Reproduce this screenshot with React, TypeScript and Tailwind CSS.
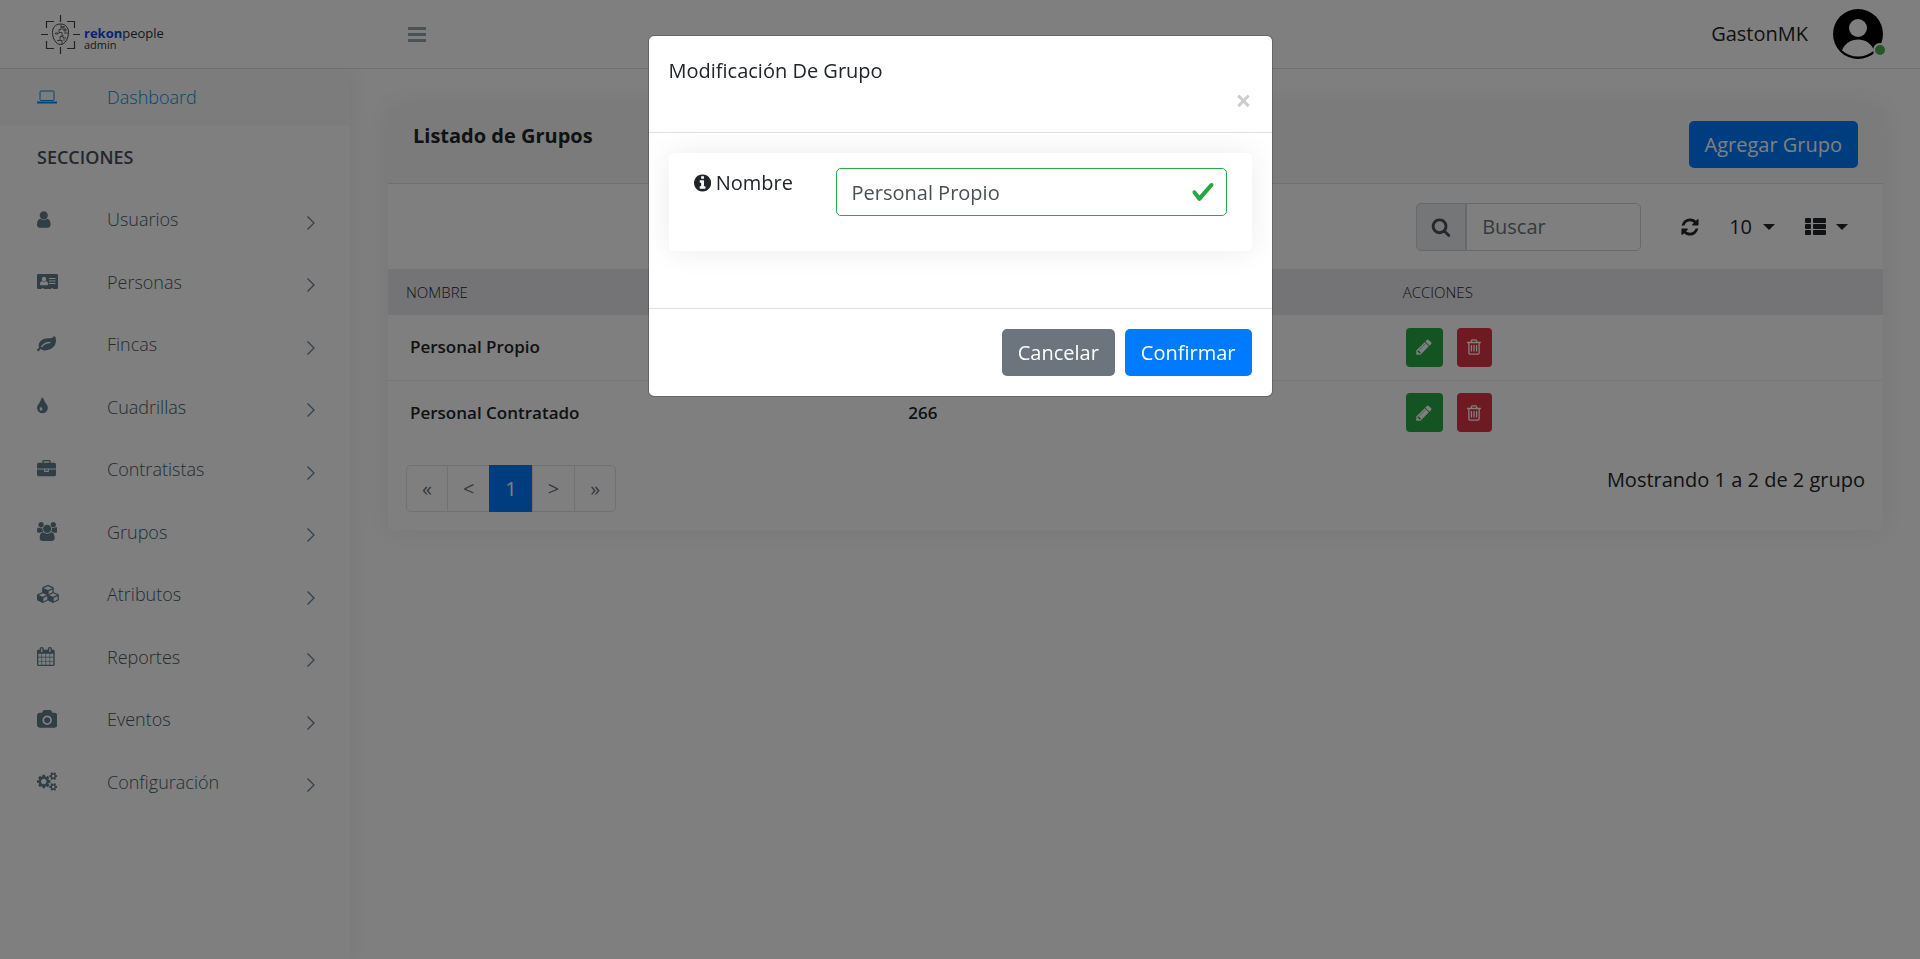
import { useState } from "react";
import type { ReactNode } from "react";

type IconProps = { className?: string };

type GlyphProps = IconProps & { d: string; w?: number };

function Glyph({ d, w = 1792, className }: GlyphProps) {
  return (
    <svg viewBox={`0 0 ${w} 1792`} fill="currentColor" aria-hidden="true" className={className}>
      <path d={d} />
    </svg>
  );
}

const glyphs = {
  user: "M1280 1399q0 109-62.5 187t-150.5 78h-854q-88 0-150.5-78t-62.5-187q0-85 8.5-160.5t31.5-152 58.5-131 94-89 134.5-34.5q131 128 313 128t313-128q76 0 134.5 34.5t94 89 58.5 131 31.5 152 8.5 160.5zm-256-887q0 159-112.5 271.5t-271.5 112.5-271.5-112.5-112.5-271.5 112.5-271.5 271.5-112.5 271.5 112.5 112.5 271.5z",
  leaf: "M1280 704q0-26-19-45t-45-19q-172 0-318 49.5t-259.5 134-235.5 219.5q-19 21-19 45 0 26 19 45t45 19q24 0 45-19 27-24 74-71t67-66q137-124 268.5-176t313.5-52q26 0 45-19t19-45zm512-198q0 95-20 193-46 224-184.5 383t-357.5 268q-214 108-438 108-148 0-286-47-15-5-88-42t-96-37q-16 0-39.5 32t-45 70-52.5 70-60 32q-43 0-63.5-17.5t-45.5-59.5q-2-4-6-11t-5.5-10-3-9.5-1.5-13.5q0-35 31-73.5t68-65.5 68-56 31-48q0-4-14-38t-16-44q-9-51-9-104 0-115 43.5-220t119-184.5 170.5-139 204-95.5q55-18 145-25.5t179.5-9 178.5-6 163.5-24 113.5-56.5l29.5-29.5 29.5-28 27-20 36.5-16 43.5-4.5q39 0 70.5 46t47.5 112 24 124 8 96z",
  tint: "M512 1152q0-36-20-69-1-1-15.5-22.5t-25.5-38-25-44-21-50.5q-4-16-21-16t-21 16q-7 23-21 50.5t-25 44-25.5 38-15.5 22.5q-20 33-20 69 0 53 37.5 90.5t90.5 37.5 90.5-37.5 37.5-90.5zm512-128q0 212-150 362t-362 150-362-150-150-362q0-145 81-275 6-9 62.5-90.5t101-151 99.5-178 83-201.5q9-30 34-47t51-17 51.5 17 33.5 47q28 93 83 201.5t99.5 178 101 151 62.5 90.5q81 127 81 275z",
  briefcase: "M640 256h512v-128h-512v128zm1152 640v480q0 66-47 113t-113 47h-1472q-66 0-113-47t-47-113v-480h672v160q0 26 19 45t45 19h320q26 0 45-19t19-45v-160h672zm-768 0v128h-256v-128h256zm768-480v384h-1792v-384q0-66 47-113t113-47h352v-160q0-40 28-68t68-28h576q40 0 68 28t28 68v160h352q66 0 113 47t47 113z",
  users: "M593 896q-162 5-265 128h-134q-82 0-138-40.5t-56-118.5q0-353 124-353 6 0 43.5 21t97.5 42.5 119 21.5q67 0 133-23-5 37-5 66 0 159 90 287zm1071 637q0 120-73 189.5t-194 69.5h-874q-121 0-194-69.5t-73-189.5q0-53 3.5-103.5t14-109 26.5-108.5 43-97.5 62-81 85.5-53.5 111.5-20q10 0 43 21.5t73 48 107 48 135 21.5 135-21.5 107-48 73-48 43-21.5q61 0 111.5 20t85.5 53.5 62 81 43 97.5 26.5 108.5 14 109 3.5 103.5zm-1024-1277q0 106-75 181t-181 75-181-75-75-181 75-181 181-75 181 75 75 181zm704 384q0 159-112.5 271.5t-271.5 112.5-271.5-112.5-112.5-271.5 112.5-271.5 271.5-112.5 271.5 112.5 112.5 271.5zm576 225q0 78-56 118.5t-138 40.5h-134q-103-123-265-128 90-128 90-287 0-29-5-66 66 23 133 23 59 0 119-21.5t97.5-42.5 43.5-21q124 0 124 353zm-128-609q0 106-75 181t-181 75-181-75-75-181 75-181 181-75 181 75 75 181z",
  cubes: "M640 1632l384-192v-314l-384 164v342zm-64-454l404-173-404-173-404 173zm1088 454l384-192v-314l-384 164v342zm-64-454l404-173-404-173-404 173zm-448-293l384-165v-266l-384 164v267zm-64-379l441-189-441-189-441 189zm1088 518v416q0 36-19 67t-52 47l-448 224q-25 14-57 14t-57-14l-448-224q-4-2-7-4-2 2-7 4l-448 224q-25 14-57 14t-57-14l-448-224q-33-16-52-47t-19-67v-416q0-38 21.5-70t56.5-48l434-186v-400q0-38 21.5-70t56.5-48l448-192q23-10 50-10t50 10l448 192q35 16 56.5 48t21.5 70v400l434 186q36 16 57 48t21 70z",
  calendar: "M128 1664h288v-288h-288v288zm352 0h320v-288h-320v288zm-352-352h288v-320h-288v320zm352 0h320v-320h-320v320zm-352-384h288v-288h-288v288zm736 736h320v-288h-320v288zm-384-736h320v-288h-320v288zm768 736h288v-288h-288v288zm-384-352h320v-320h-320v320zm-352-864v-288q0-13-9.5-22.5t-22.5-9.5h-64q-13 0-22.5 9.5t-9.5 22.5v288q0 13 9.5 22.5t22.5 9.5h64q13 0 22.5-9.5t9.5-22.5zm736 864h288v-320h-288v320zm-384-384h320v-288h-320v288zm384 0h288v-288h-288v288zm32-480v-288q0-13-9.5-22.5t-22.5-9.5h-64q-13 0-22.5 9.5t-9.5 22.5v288q0 13 9.5 22.5t22.5 9.5h64q13 0 22.5-9.5t9.5-22.5zm384-64v1280q0 52-38 90t-90 38h-1408q-52 0-90-38t-38-90v-1280q0-52 38-90t90-38h128v-96q0-66 47-113t113-47h64q66 0 113 47t47 113v96h384v-96q0-66 47-113t113-47h64q66 0 113 47t47 113v96h128q52 0 90 38t38 90z",
  camera: "M960 672q119 0 203.5 84.5t84.5 203.5-84.5 203.5-203.5 84.5-203.5-84.5-84.5-203.5 84.5-203.5 203.5-84.5zm704-416q106 0 181 75t75 181v896q0 106-75 181t-181 75h-1408q-106 0-181-75t-75-181v-896q0-106 75-181t181-75h224l51-136q19-49 69.5-84.5t103.5-35.5h512q53 0 103.5 35.5t69.5 84.5l51 136h224zm-704 1152q185 0 316.5-131.5t131.5-316.5-131.5-316.5-316.5-131.5-316.5 131.5-131.5 316.5 131.5 316.5 316.5 131.5z",
  cogs: "M896 896q0-106-75-181t-181-75-181 75-75 181 75 181 181 75 181-75 75-181zm768 512q0-52-38-90t-90-38-90 38-38 90q0 53 37.5 90.5t90.5 37.5 90.5-37.5 37.5-90.5zm0-1024q0-52-38-90t-90-38-90 38-38 90q0 53 37.5 90.5t90.5 37.5 90.5-37.5 37.5-90.5zm-384 421v185q0 10-7 19.5t-16 10.5l-155 24q-11 35-32 76 34 48 90 115 7 11 7 20 0 12-7 19-23 30-82.5 89.5t-78.5 59.5q-11 0-21-7l-115-90q-37 19-77 31-11 108-23 155-7 24-30 24h-186q-11 0-20-7.5t-10-17.5l-23-153q-34-10-75-31l-118 89q-7 7-20 7-11 0-21-8-144-133-144-160 0-9 7-19 10-14 41-53t47-61q-23-44-35-82l-152-24q-10-1-17-9.5t-7-19.5v-185q0-10 7-19.5t16-10.5l155-24q11-35 32-76-34-48-90-115-7-11-7-20 0-12 7-20 22-30 82-89t79-59q11 0 21 7l115 90q34-18 77-32 11-108 23-154 7-24 30-24h186q11 0 20 7.5t10 17.5l23 153q34 10 75 31l118-89q8-7 20-7 11 0 21 8 144 133 144 160 0 8-7 19-12 16-42 54t-45 60q23 48 34 82l152 23q10 2 17 10.5t7 19.5zm640 533v140q0 16-149 31-12 27-30 52 51 113 51 138 0 4-4 7-122 71-124 71-8 0-46-47t-52-68q-20 2-30 2t-30-2q-14 21-52 68t-46 47q-2 0-124-71-4-3-4-7 0-25 51-138-18-25-30-52-149-15-149-31v-140q0-16 149-31 13-29 30-52-51-113-51-138 0-4 4-7 4-2 35-20t59-34 30-16q8 0 46 46.5t52 67.5q20-2 30-2t30 2q51-71 92-112l6-2q4 0 124 70 4 3 4 7 0 25-51 138 17 23 30 52 149 15 149 31zm0-1024v140q0 16-149 31-12 27-30 52 51 113 51 138 0 4-4 7-122 71-124 71-8 0-46-47t-52-68q-20 2-30 2t-30-2q-14 21-52 68t-46 47q-2 0-124-71-4-3-4-7 0-25 51-138-18-25-30-52-149-15-149-31v-140q0-16 149-31 13-29 30-52-51-113-51-138 0-4 4-7 4-2 35-20t59-34 30-16q8 0 46 46.5t52 67.5q20-2 30-2t30 2q51-71 92-112l6-2q4 0 124 70 4 3 4 7 0 25-51 138 17 23 30 52 149 15 149 31z",
  search: "M1216 832q0-185-131.5-316.5t-316.5-131.5-316.5 131.5-131.5 316.5 131.5 316.5 316.5 131.5 316.5-131.5 131.5-316.5zm512 832q0 52-38 90t-90 38q-54 0-90-38l-343-342q-179 124-399 124-143 0-273.5-55.5t-225-150-150-225-55.5-273.5 55.5-273.5 150-225 225-150 273.5-55.5 273.5 55.5 225 150 150 225 55.5 273.5q0 220-124 399l343 343q37 37 37 90z",
  refresh: "M1639 1056q0 5-1 7-64 268-268 434.5t-478 166.5q-146 0-282.5-55t-243.5-157l-129 129q-19 19-45 19t-45-19-19-45v-448q0-26 19-45t45-19h448q26 0 45 19t19 45-19 45l-137 137q71 66 161 102t187 36q134 0 250-65t186-179q11-17 53-117 8-23 30-23h192q13 0 22.5 9.5t9.5 22.5zm25-800v448q0 26-19 45t-45 19h-448q-26 0-45-19t-19-45 19-45l138-138q-148-137-349-137-134 0-250 65t-186 179q-11 17-53 117-8 23-30 23h-199q-13 0-22.5-9.5t-9.5-22.5v-7q65-268 270-434.5t480-166.5q146 0 284 55.5t245 156.5l130-129q19-19 45-19t45 19 19 45z",
  pencil: "M491 1536l91-91-235-235-91 91v107h128v128h107zm523-928q0-22-22-22-10 0-17 7l-542 542q-7 7-7 17 0 22 22 22 10 0 17-7l542-542q7-7 7-17zm-54-192l416 416-832 832h-416v-416zm683 96q0 53-37 90l-166 166-416-416 166-165q36-38 90-38 53 0 91 38l235 234q37 39 37 91z",
  trash: "M704 736v576q0 14-9 23t-23 9h-64q-14 0-23-9t-9-23v-576q0-14 9-23t23-9h64q14 0 23 9t9 23zm256 0v576q0 14-9 23t-23 9h-64q-14 0-23-9t-9-23v-576q0-14 9-23t23-9h64q14 0 23 9t9 23zm256 0v576q0 14-9 23t-23 9h-64q-14 0-23-9t-9-23v-576q0-14 9-23t23-9h64q14 0 23 9t9 23zm128 724v-948h-896v948q0 22 7 40.5t14.5 27 10.5 8.5h832q3 0 10.5-8.5t14.5-27 7-40.5zm-672-1076h448l-48-117q-7-9-17-11h-317q-10 2-17 11zm928 32v64q0 14-9 23t-23 9h-96v948q0 83-47 143.5t-113 60.5h-832q-66 0-113-58.5t-47-141.5v-952h-96q-14 0-23-9t-9-23v-64q0-14 9-23t23-9h309l70-167q15-37 54-63t79-26h320q40 0 79 26t54 63l70 167h309q14 0 23 9t9 23z",
  info: "M1024 1376v-160q0-14-9-23t-23-9h-96v-512q0-14-9-23t-23-9h-320q-14 0-23 9t-9 23v160q0 14 9 23t23 9h96v320h-96q-14 0-23 9t-9 23v160q0 14 9 23t23 9h448q14 0 23-9t9-23zm-128-896v-160q0-14-9-23t-23-9h-192q-14 0-23 9t-9 23v160q0 14 9 23t23 9h192q14 0 23-9t9-23zm640 416q0 209-103 385.5t-279.5 279.5-385.5 103-385.5-103-279.5-279.5-103-385.5 103-385.5 279.5-279.5 385.5-103 385.5 103 279.5 279.5 103 385.5z",
};

function LaptopIcon({ className }: IconProps) {
  return (
    <svg viewBox="0 0 20 14" fill="none" stroke="currentColor" className={className} aria-hidden="true">
      <rect x="3" y="1" width="14" height="9.5" rx="1" />
      <path d="M0 12.5h20" strokeWidth="2" />
    </svg>
  );
}

function IdCardIcon({ className }: IconProps) {
  return (
    <svg viewBox="0 0 21 16" className={className} aria-hidden="true">
      <path fill="currentColor" fillRule="evenodd" d="M1.3 0h18.4Q21 0 21 1.3v12.4Q21 15 19.700 15H16v-1h-1.500v1h-8v-1H5v1H1.300Q0 15 0 13.700V1.300Q0 0 1.300 0zM7 2.800a2.200 2.400 0 1 0 0 4.800 2.200 2.400 0 0 0 0-4.800zM3 10.400q0 .9 1 .9h6q1 0 1-.9 0-3.200-2-3.200-2 1.400-4 0-2 0-2 3.200zM12 4v1.100h6.500V4zM12 6.500v1.100h6.500V6.500zM12 9v1.100h6.500V9z" />
    </svg>
  );
}

function ThListIcon({ className }: IconProps) {
  return (
    <svg viewBox="0 0 21 17" fill="currentColor" className={className} aria-hidden="true">
      {[0, 6, 12].map((y) => (
        <g key={y}>
          <rect x="0" y={y} width="6" height="5" rx="1" />
          <rect x="8" y={y} width="13" height="5" rx="1" />
        </g>
      ))}
    </svg>
  );
}

function ChevronIcon() {
  return (
    <svg viewBox="0 0 8 14" fill="none" stroke="currentColor" strokeWidth="1.2" className="mt-[7px] h-3.5 w-2" aria-hidden="true">
      <path d="M.5.5 7 7 .5 13.500" />
    </svg>
  );
}

function Caret() {
  return (
    <svg viewBox="0 0 12 6" fill="currentColor" className="h-1.5 w-3" aria-hidden="true">
      <path d="M0 0h12L6 6z" />
    </svg>
  );
}

function Logo() {
  return (
    <a href="#inicio" className="flex items-center gap-1 pt-px" aria-label="rekonpeople admin">
      <svg viewBox="0 0 39 39" fill="none" stroke="#444" className="size-[39px]" aria-hidden="true">
        <path d="M5.500 13V6.500H13M26 6.500h7.500V13M33.500 26v7.500H26M13 33.500H5.500V26" strokeWidth="1.200" />
        <path d="M19.500 0v7M19.500 32v7M0 19.500h7M32 19.500h7" strokeWidth="1.200" />
        <path d="M19.500 9c-5 0-8 3.500-8 8.500 0 6 3.500 12 8 12s8-6 8-12c0-5-3-8.500-8-8.500z" />
        <path d="M20 9.500v5h-2v3h3v4h-2v4h2v3.500M22 11v4h4M23 18h4M22 20v3h3M22 25h2M14 18.500q2-1.500 3.500 0-1.500 1.500-3.500 0M16 25.500h3M20 12h4M24 13v4" strokeWidth=".8" />
      </svg>
      <span className="flex flex-col pt-2 text-[#333]">
        <span className="text-[13px] leading-3"><b className="text-[#1048e0]">rekon</b>people</span>
        <span className="text-[11px] leading-3">admin</span>
      </span>
    </a>
  );
}

function Avatar() {
  return (
    <span className="relative block size-[50px]">
      <svg viewBox="0 0 50 50" className="size-[50px]" aria-hidden="true">
        <circle cx="25" cy="25" r="25" fill="#000" />
        <circle cx="25" cy="19" r="9" fill="#fff" />
        <path d="M9 41.500C12 34 18 30.500 25 30.500S38 34 41 41.500Q34 47.500 25 47.500T9 41.500z" fill="#fff" />
      </svg>
      <span className="absolute -right-1 bottom-0.5 size-3.5 rounded-full border-2 border-white bg-[#4caf50]" />
    </span>
  );
}

const sections: { label: string; icon: ReactNode }[] = [
  { label: "Usuarios", icon: <Glyph d={glyphs.user} w={1280} className="h-[19px]" /> },
  { label: "Personas", icon: <IdCardIcon className="h-4" /> },
  { label: "Fincas", icon: <Glyph d={glyphs.leaf} className="h-[19px]" /> },
  { label: "Cuadrillas", icon: <Glyph d={glyphs.tint} w={1024} className="h-[19px]" /> },
  { label: "Contratistas", icon: <Glyph d={glyphs.briefcase} className="h-[19px]" /> },
  { label: "Grupos", icon: <Glyph d={glyphs.users} w={1920} className="h-[19px]" /> },
  { label: "Atributos", icon: <Glyph d={glyphs.cubes} w={2304} className="h-[18px]" /> },
  { label: "Reportes", icon: <Glyph d={glyphs.calendar} w={1664} className="h-[19px]" /> },
  { label: "Eventos", icon: <Glyph d={glyphs.camera} w={1920} className="h-[19px]" /> },
  { label: "Configuración", icon: <Glyph d={glyphs.cogs} w={1920} className="h-[19px]" /> },
];

const groups = [
  { name: "Personal Propio", people: 184 },
  { name: "Personal Contratado", people: 266 },
];

const pages = ["«", "<", "1", ">", "»"];

function Topbar() {
  return (
    <header className="relative z-10 flex h-[69px] shrink-0 items-center border-b border-[#e0e0e0] bg-white pr-[37px] pl-[41px]">
      <div className="w-[367px]">
        <Logo />
      </div>
      <button type="button" aria-label="Menú" className="flex w-[18px] flex-col gap-[3px]">
        <span className="h-[3px] bg-[#90a4ae]" />
        <span className="h-[3px] bg-[#90a4ae]" />
        <span className="h-[3px] bg-[#90a4ae]" />
      </button>
      <div className="ml-auto flex items-center gap-[25px]">
        <span>GastonMK</span>
        <Avatar />
      </div>
    </header>
  );
}

function Sidebar() {
  return (
    <nav className="w-[350px] shrink-0 text-lg font-light text-[#607d8b] shadow-[1px_0_20px_rgba(0,0,0,0.08)]">
      <a href="#dashboard" className="flex h-[57px] items-center bg-[#f9f9f9] pb-0.5 pl-[37px] text-[#0290e0]">
        <span className="w-[70px]">
          <LaptopIcon className="h-3.5" />
        </span>
        Dashboard
      </a>
      <h2 className="flex h-[62px] items-center pl-[37px] font-semibold text-[#4a4f5c]">SECCIONES</h2>
      <ul className="grid h-[625px] auto-rows-fr">
        {sections.map((section) => (
          <li key={section.label} className="flex">
            <a href={`#${section.label.toLowerCase()}`} className="flex flex-1 items-center pr-[35px] pl-[37px]">
              <span className="w-[70px]">{section.icon}</span>
              <span className="flex-1 text-[#455a64]">{section.label}</span>
              <ChevronIcon />
            </a>
          </li>
        ))}
      </ul>
    </nav>
  );
}

function Toolbar() {
  return (
    <div className="flex h-[85px] items-center justify-end pr-[35px]">
      <div className="flex h-12 w-[225px]">
        <label htmlFor="buscar" className="flex w-[50px] shrink-0 items-center justify-center rounded-l-[5px] border border-[#ced4da] bg-[#e9ecef] text-[#495057]">
          <Glyph d={glyphs.search} className="size-5" />
        </label>
        <input id="buscar" type="search" aria-label="Buscar" placeholder="Buscar" className="w-full min-w-0 rounded-r-[5px] border border-[#ced4da] px-[15px] placeholder:text-[#6c757d]" />
      </div>
      <button type="button" aria-label="Actualizar" className="ml-[39px]">
        <Glyph d={glyphs.refresh} className="size-5" />
      </button>
      <button type="button" className="ml-[29px] flex items-center gap-[11px]">
        10 <Caret />
      </button>
      <button type="button" aria-label="Columnas" className="ml-[30px] flex items-center gap-2.5">
        <ThListIcon className="h-[17px]" />
        <Caret />
      </button>
    </div>
  );
}

function GroupsTable() {
  return (
    <table className="w-full table-fixed text-left">
      <thead className="bg-[#e8e8ec] text-[15px] uppercase">
        <tr className="h-[46px]">
          <th className="px-[18px] font-light">Nombre</th>
          <th className="px-[18px] font-light">Personas</th>
          <th className="px-[18px] font-light">Acciones</th>
        </tr>
      </thead>
      <tbody className="text-[17px] font-semibold">
        {groups.map((group) => (
          <tr key={group.name} className="h-[65px] border-b border-[#e9ecef] last:border-0">
            <td className="px-[22px]">{group.name}</td>
            <td className="px-[22px]">{group.people}</td>
            <td className="px-[21px]">
              <div className="flex gap-3.5">
                <button type="button" aria-label={`Editar ${group.name}`} className="flex h-[39px] w-[37px] items-center justify-center rounded bg-[#28a745] text-white">
                  <Glyph d={glyphs.pencil} className="size-[18px]" />
                </button>
                <button type="button" aria-label={`Eliminar ${group.name}`} className="flex h-[39px] w-[35px] items-center justify-center rounded bg-[#dc3545] text-white">
                  <Glyph d={glyphs.trash} className="size-[18px]" />
                </button>
              </div>
            </td>
          </tr>
        ))}
      </tbody>
    </table>
  );
}

function EditGroupModal({ onClose }: { onClose: () => void }) {
  const [name, setName] = useState("Personal Propio");

  return (
    <div className="fixed inset-0 z-20 flex items-start justify-center bg-black/50 pt-[35px]">
      <div role="dialog" aria-modal="true" aria-labelledby="modal-title" className="w-[625px] max-w-full rounded-md border border-black/20 bg-white bg-clip-padding">
        <div className="flex h-[97px] flex-col border-b border-[#dee2e6] p-5">
          <h2 id="modal-title" className="leading-[30px]">Modificación De Grupo</h2>
          <button type="button" aria-label="Cerrar" onClick={onClose} className="self-end text-[28px] leading-7 font-bold text-black/20">
            ×
          </button>
        </div>
        <div className="px-5 pt-5 pb-[57px]">
          <div className="flex h-[98px] items-start rounded-[5px] px-[25px] pt-[15px] shadow-[0_0_30px_rgba(0,0,0,0.08)]">
            <label htmlFor="nombre" className="flex w-[142px] shrink-0 items-center gap-[5px] leading-[30px]">
              <Glyph d={glyphs.info} w={1536} className="h-5" />
              Nombre
            </label>
            <div className="relative flex-1">
              <input
                id="nombre"
                value={name}
                onChange={(e) => setName(e.target.value)}
                className="h-12 w-full rounded-[5px] border border-[#28a745] pr-12 pl-[15px] text-[#495057]"
              />
              <svg viewBox="0 0 8 8" className="absolute top-3 right-3 size-6" aria-hidden="true">
                <path fill="#28a745" d="M2.300 6.730.6 4.530c-.4-1.040.46-1.400 1.100-.8l1.100 1.400 3.400-3.800c.6-.63 1.600-.27 1.200.7l-4 4.600c-.43.5-.8.400-1.100.1z" />
              </svg>
            </div>
          </div>
        </div>
        <div className="flex justify-end gap-2.5 border-t border-[#dee2e6] p-5">
          <button type="button" onClick={onClose} className="h-[47px] rounded-[5px] bg-[#6c757d] px-4 text-white">Cancelar</button>
          <button type="button" onClick={onClose} className="h-[47px] rounded-[5px] bg-[#007bff] px-4 text-white">Confirmar</button>
        </div>
      </div>
    </div>
  );
}

export default function App() {
  const [open, setOpen] = useState(true);

  return (
    <div className="flex min-h-screen flex-col bg-white font-['Open_Sans',sans-serif] text-xl text-[#212529]">
      <Topbar />
      <div className="flex flex-1">
        <Sidebar />
        <main className="min-w-0 flex-1 py-[37px] pr-[37px] pl-[38px]">
          <section className="rounded-[5px] shadow-[0_0_30px_rgba(0,0,0,0.08)]">
            <div className="flex h-[78px] items-start justify-between rounded-t-[5px] border-b border-[#dfdfdf] bg-[#f7f7f7] px-[25px] py-[15px]">
              <h1 className="leading-[30px] font-bold">Listado de Grupos</h1>
              <button type="button" onClick={() => setOpen(true)} className="h-[47px] rounded-[5px] bg-[#007bff] px-4 text-white">
                Agregar Grupo
              </button>
            </div>
            <Toolbar />
            <GroupsTable />
            <div className="flex items-start justify-between px-[18px] pt-5 pb-[18px]">
              <div className="flex h-[47px] text-[#6c757d]">
                {pages.map((page) => (
                  <button
                    key={page}
                    type="button"
                    className={`-ml-px border px-[15px] first:ml-0 first:rounded-l-[5px] last:rounded-r-[5px] ${
                      page === "1" ? "border-[#007bff] bg-[#007bff] text-white" : "border-[#dee2e6]"
                    }`}
                  >
                    {page}
                  </button>
                ))}
              </div>
              <p className="leading-[30px]">Mostrando 1 a 2 de 2 grupo</p>
            </div>
          </section>
        </main>
      </div>
      {open && <EditGroupModal onClose={() => setOpen(false)} />}
    </div>
  );
}
